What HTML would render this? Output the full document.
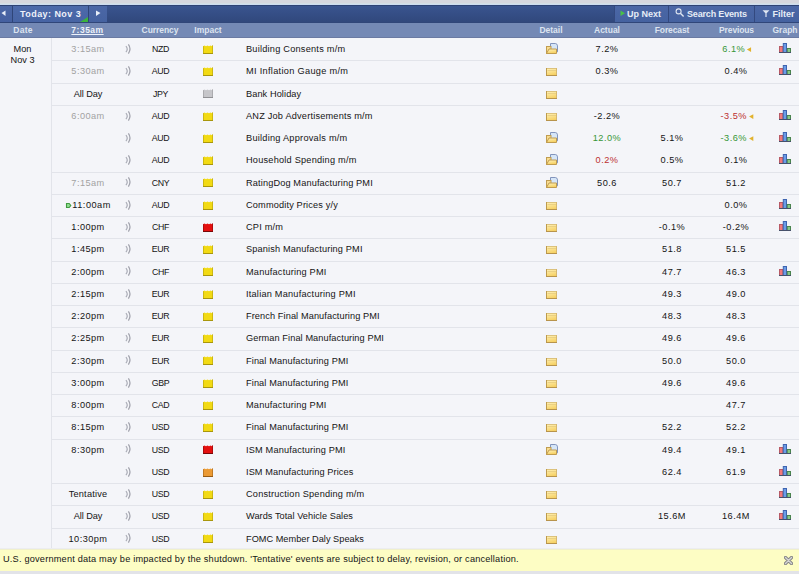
<!DOCTYPE html>
<html><head><meta charset="utf-8"><style>
*{margin:0;padding:0;box-sizing:border-box}
html,body{width:799px;height:574px;overflow:hidden;background:#f4f5f9;font-family:"Liberation Sans",sans-serif;}
.a{position:absolute}
.t{position:absolute;white-space:nowrap;font-size:9.2px;letter-spacing:0px;line-height:12px;color:#333}
.c{transform:translateX(-50%)}
svg{display:block}
.nb{color:#e6ecf6;font-weight:bold;font-size:9px}
.hb{color:#dde4f0;font-weight:bold;font-size:8.5px}
</style></head><body>
<svg width='0' height='0' style='position:absolute'><defs><linearGradient id='fg' x1='0' y1='0' x2='0.3' y2='1'><stop offset='0' stop-color='#fff3bc'/><stop offset='1' stop-color='#f6d062'/></linearGradient></defs></svg>

<div class="a" style="left:0px;top:0px;width:799px;height:5px;background:#d6d7de;"></div>
<div class="a" style="left:0px;top:3px;width:799px;height:1px;background:#d4dee4;"></div>
<div class="a" style="left:0px;top:4px;width:799px;height:1px;background:#cddcf0;"></div>
<div class="a" style="left:0px;top:5px;width:799px;height:18px;background:linear-gradient(#3a5590,#30477b);"></div>
<div class="a" style="left:0px;top:5px;width:799px;height:1px;background:#2e4374;"></div>
<div class="a" style="left:0px;top:22px;width:799px;height:1px;background:#304679;"></div>
<div class="a" style="left:0px;top:6px;width:12px;height:16px;background:linear-gradient(#4a66a6,#4560a0);"></div>
<div class="a" style="left:12px;top:6px;width:1px;height:16px;background:#2f4578;"></div>
<div class="a" style="left:13px;top:6px;width:75px;height:16px;background:linear-gradient(#4d6aaa,#4764a4);"></div>
<div class="a" style="left:88px;top:6px;width:1px;height:16px;background:#2f4578;"></div>
<div class="a" style="left:89px;top:6px;width:18px;height:16px;background:linear-gradient(#4b67a6,#4562a0);"></div>
<svg class="a" style="left:1px;top:10px" width="6" height="7"><path d="M0.5 3 L4.5 0.5 L4.5 6 Z" fill="#e8eef8"/></svg>
<svg class="a" style="left:95px;top:10px" width="6" height="7"><path d="M5.5 3 L1 0.5 L1 6 Z" fill="#e8eef8"/></svg>
<svg class="a" style="left:80px;top:17px" width="8" height="5"><path d="M8 0 L8 5 L0 5 Z" fill="#3cb43c"/></svg>
<div class="t" style="left:20px;top:8.00px;color:#eef2fa;font-weight:bold;font-size:9px;letter-spacing:0.44px">Today: Nov 3</div>
<div class="a" style="left:615px;top:6px;width:184px;height:16px;background:linear-gradient(#4b67a6,#4562a0);"></div>
<div class="a" style="left:614px;top:6px;width:1px;height:16px;background:#33497f;"></div>
<div class="a" style="left:668px;top:6px;width:1px;height:16px;background:#33497f;"></div>
<div class="a" style="left:754px;top:6px;width:1px;height:16px;background:#33497f;"></div>
<svg class="a" style="left:620px;top:10px" width="6" height="7"><path d="M0.5 0.5 L5 3.2 L0.5 6 Z" fill="#48c048"/></svg>
<div class="t" style="left:627px;top:8.00px;color:#e6ecf6;font-weight:bold;font-size:9px">Up Next</div>
<svg class="a" style="left:675px;top:8px" width="10" height="10"><circle cx="3.6" cy="3.4" r="2.5" fill="none" stroke="#dfe6f2" stroke-width="1.1"/><path d="M5.4 5.2 L8.6 8.4" stroke="#dfe6f2" stroke-width="1.4"/></svg>
<div class="t" style="left:687px;top:8.00px;color:#e6ecf6;font-weight:bold;font-size:9px;letter-spacing:-0.17px">Search Events</div>
<svg class="a" style="left:762px;top:10px" width="8" height="8"><path d="M0.5 0.3 L7.5 0.3 L4.6 3.3 L4.6 7 L3.4 7 L3.4 3.3 Z" fill="#dfe6f2"/></svg>
<div class="t" style="left:772.5px;top:8.00px;color:#e6ecf6;font-weight:bold;font-size:9px">Filter</div>
<div class="a" style="left:0px;top:23px;width:799px;height:14px;background:#7489b5;"></div>
<div class="a" style="left:0px;top:37px;width:799px;height:1px;background:#6a7aa2;"></div>
<div class="t c" style="left:23px;top:24.00px;color:#dde4f0;font-weight:bold;font-size:8.5px;letter-spacing:0.25px">Date</div>
<div class="t c" style="left:160px;top:24.00px;color:#dde4f0;font-weight:bold;font-size:8.5px;letter-spacing:-0.05px">Currency</div>
<div class="t c" style="left:208px;top:24.00px;color:#dde4f0;font-weight:bold;font-size:8.5px;letter-spacing:0px">Impact</div>
<div class="t c" style="left:551px;top:24.00px;color:#dde4f0;font-weight:bold;font-size:8.5px;letter-spacing:0px">Detail</div>
<div class="t c" style="left:607px;top:24.00px;color:#dde4f0;font-weight:bold;font-size:8.5px;letter-spacing:0px">Actual</div>
<div class="t c" style="left:672px;top:24.00px;color:#dde4f0;font-weight:bold;font-size:8.5px;letter-spacing:-0.12px">Forecast</div>
<div class="t c" style="left:736.5px;top:24.00px;color:#dde4f0;font-weight:bold;font-size:8.5px;letter-spacing:-0.13px">Previous</div>
<div class="t c" style="left:785px;top:24.00px;color:#dde4f0;font-weight:bold;font-size:8.5px;letter-spacing:0px">Graph</div>
<div class="t c" style="left:87.5px;top:24.00px;color:#eef2fa;font-weight:bold;font-size:8.5px;letter-spacing:0.5px;text-decoration:underline">7:35am</div>
<div class="a" style="left:51px;top:38px;width:1px;height:511px;background:#e2e4ea;"></div>
<div class="t c" style="left:22.5px;top:43.30px;color:#141414;letter-spacing:0.1px">Mon</div>
<div class="t c" style="left:22.5px;top:54.30px;color:#141414;letter-spacing:0px">Nov 3</div>
<div class="t c" style="left:88px;top:43.00px;color:#a2a2a2;letter-spacing:0.45px">3:15am</div>
<div class="a" style="left:124.5px;top:44px"><svg width="8" height="11" viewBox="0 0 8 11"><path d="M0.9 2.2 Q3.6 5.2 0.9 8.2" fill="none" stroke="#a8aab4" stroke-width="1.15"/><path d="M3.4 0.4 Q6.6 5 3.4 9.6" fill="none" stroke="#a0a2ac" stroke-width="1.25"/></svg></div>
<div class="t c" style="left:160.5px;top:43.00px;color:#141414;letter-spacing:-0.3px;font-size:8.8px">NZD</div>
<div class="a" style="left:203px;top:45px;height:9px"><svg width="10" height="9" viewBox="0 0 10 9"><path d="M0 1.2 L1.5 0.6 L3 1.2 L4.5 0.6 L6 1.2 L7.5 0.6 L9 1.2 L10 0 L10 9 L0 9 Z" fill="#f2da14"/><rect x="0" y="8" width="10" height="1" fill="#a8960c"/><rect x="0" y="1.2" width="0.9" height="7.8" fill="#a8960c" opacity="0.55"/><rect x="9.1" y="0.3" width="0.9" height="8.7" fill="#a8960c" opacity="0.55"/></svg></div>
<div class="t" style="left:246px;top:43.00px;color:#141414;letter-spacing:0.23px">Building Consents m/m</div>
<div class="a" style="left:546px;top:43px;height:12px"><svg width="13" height="12" viewBox="0 0 13 12"><path d="M4.5 0.5 L9.3 0.5 Q11.5 0.7 11.5 2.9 L11.5 8.8 L4.5 8.8 Z" fill="#d6e6f8" stroke="#8294bc" stroke-width="1"/><rect x="0.5" y="3.5" width="4.5" height="7" fill="#f8dc90" stroke="#c09c50" stroke-width="1"/><path d="M3 6 L10.5 6 L10.5 10.5 L0.5 10.5 Z" fill="url(#fg)" stroke="#c09c50" stroke-width="1"/></svg></div>
<div class="t c" style="left:607px;top:43.00px;color:#141414;letter-spacing:0.5px">7.2%</div>
<div class="t c" style="left:737px;top:43.00px;color:#379637;letter-spacing:0.5px">6.1%<span style="display:inline-block;width:6.5px"></span></div>
<div class="t c" style="left:737px;top:47px;height:6px;color:transparent;letter-spacing:0.5px">6.1%<span style="display:inline-block;width:6.5px;vertical-align:top;position:relative"><svg style="position:absolute;left:1.5px;top:0" width="6" height="6" viewBox="0 0 6 6"><path d="M0.6 2.6 L4.8 0.3 L4.8 4.9 Z" fill="#e2b22c"/></svg></span></div>
<div class="a" style="left:779px;top:43px;height:10px"><svg width="12" height="10" viewBox="0 0 12 10"><rect x="0.5" y="3.5" width="3.2" height="6" fill="#f27a7a" stroke="#b85a66" stroke-width="1"/><rect x="4.3" y="0.5" width="3.2" height="9" fill="#6c9ce6" stroke="#3e64b0" stroke-width="1"/><rect x="8.3" y="5.5" width="3.2" height="4" fill="#86c886" stroke="#4a844e" stroke-width="1"/><rect x="0" y="9" width="12" height="1" fill="#46506a"/></svg></div>
<div class="a" style="left:52px;top:60px;width:747px;height:1px;background:#e2e4ea"></div>
<div class="t c" style="left:88px;top:65.00px;color:#a2a2a2;letter-spacing:0.45px">5:30am</div>
<div class="a" style="left:124.5px;top:66px"><svg width="8" height="11" viewBox="0 0 8 11"><path d="M0.9 2.2 Q3.6 5.2 0.9 8.2" fill="none" stroke="#a8aab4" stroke-width="1.15"/><path d="M3.4 0.4 Q6.6 5 3.4 9.6" fill="none" stroke="#a0a2ac" stroke-width="1.25"/></svg></div>
<div class="t c" style="left:160.5px;top:65.00px;color:#141414;letter-spacing:-0.3px;font-size:8.8px">AUD</div>
<div class="a" style="left:203px;top:67px;height:9px"><svg width="10" height="9" viewBox="0 0 10 9"><path d="M0 1.2 L1.5 0.6 L3 1.2 L4.5 0.6 L6 1.2 L7.5 0.6 L9 1.2 L10 0 L10 9 L0 9 Z" fill="#f2da14"/><rect x="0" y="8" width="10" height="1" fill="#a8960c"/><rect x="0" y="1.2" width="0.9" height="7.8" fill="#a8960c" opacity="0.55"/><rect x="9.1" y="0.3" width="0.9" height="8.7" fill="#a8960c" opacity="0.55"/></svg></div>
<div class="t" style="left:246px;top:65.00px;color:#141414;letter-spacing:0.31px">MI Inflation Gauge m/m</div>
<div class="a" style="left:546px;top:68px;height:12px"><svg width="11" height="9" viewBox="0 0 11 9"><rect x="0" y="0" width="11" height="8" fill="url(#fg)"/><rect x="0" y="0" width="11" height="1" fill="#dcc27c"/><rect x="10" y="0" width="1" height="8" fill="#d6b870"/><rect x="0" y="0" width="1" height="8" fill="#bd9a4c"/><rect x="0" y="7" width="11" height="1" fill="#b8944c"/><rect x="1.5" y="2" width="8.5" height="1" fill="#e6cc80" opacity="0.8"/></svg></div>
<div class="t c" style="left:607px;top:65.00px;color:#141414;letter-spacing:0.5px">0.3%</div>
<div class="t c" style="left:736px;top:65.00px;color:#141414;letter-spacing:0.5px">0.4%</div>
<div class="a" style="left:779px;top:65px;height:10px"><svg width="12" height="10" viewBox="0 0 12 10"><rect x="0.5" y="3.5" width="3.2" height="6" fill="#f27a7a" stroke="#b85a66" stroke-width="1"/><rect x="4.3" y="0.5" width="3.2" height="9" fill="#6c9ce6" stroke="#3e64b0" stroke-width="1"/><rect x="8.3" y="5.5" width="3.2" height="4" fill="#86c886" stroke="#4a844e" stroke-width="1"/><rect x="0" y="9" width="12" height="1" fill="#46506a"/></svg></div>
<div class="a" style="left:52px;top:83px;width:747px;height:1px;background:#e2e4ea"></div>
<div class="t c" style="left:88px;top:88.00px;color:#141414;letter-spacing:-0.1px">All Day</div>
<div class="t c" style="left:160.5px;top:88.00px;color:#141414;letter-spacing:-0.3px;font-size:8.8px">JPY</div>
<div class="a" style="left:203px;top:89px;height:9px"><svg width="10" height="9" viewBox="0 0 10 9"><path d="M0 1.2 L1.5 0.6 L3 1.2 L4.5 0.6 L6 1.2 L7.5 0.6 L9 1.2 L10 0 L10 9 L0 9 Z" fill="#c6c6ca"/><rect x="0" y="8" width="10" height="1" fill="#909094"/><rect x="0" y="1.2" width="0.9" height="7.8" fill="#909094" opacity="0.55"/><rect x="9.1" y="0.3" width="0.9" height="8.7" fill="#909094" opacity="0.55"/></svg></div>
<div class="t" style="left:246px;top:88.00px;color:#141414;letter-spacing:0.09px">Bank Holiday</div>
<div class="a" style="left:546px;top:91px;height:12px"><svg width="11" height="9" viewBox="0 0 11 9"><rect x="0" y="0" width="11" height="8" fill="url(#fg)"/><rect x="0" y="0" width="11" height="1" fill="#dcc27c"/><rect x="10" y="0" width="1" height="8" fill="#d6b870"/><rect x="0" y="0" width="1" height="8" fill="#bd9a4c"/><rect x="0" y="7" width="11" height="1" fill="#b8944c"/><rect x="1.5" y="2" width="8.5" height="1" fill="#e6cc80" opacity="0.8"/></svg></div>
<div class="a" style="left:52px;top:105px;width:747px;height:1px;background:#e2e4ea"></div>
<div class="t c" style="left:88px;top:110.00px;color:#a2a2a2;letter-spacing:0.45px">6:00am</div>
<div class="a" style="left:124.5px;top:111px"><svg width="8" height="11" viewBox="0 0 8 11"><path d="M0.9 2.2 Q3.6 5.2 0.9 8.2" fill="none" stroke="#a8aab4" stroke-width="1.15"/><path d="M3.4 0.4 Q6.6 5 3.4 9.6" fill="none" stroke="#a0a2ac" stroke-width="1.25"/></svg></div>
<div class="t c" style="left:160.5px;top:110.00px;color:#141414;letter-spacing:-0.3px;font-size:8.8px">AUD</div>
<div class="a" style="left:203px;top:112px;height:9px"><svg width="10" height="9" viewBox="0 0 10 9"><path d="M0 1.2 L1.5 0.6 L3 1.2 L4.5 0.6 L6 1.2 L7.5 0.6 L9 1.2 L10 0 L10 9 L0 9 Z" fill="#f2da14"/><rect x="0" y="8" width="10" height="1" fill="#a8960c"/><rect x="0" y="1.2" width="0.9" height="7.8" fill="#a8960c" opacity="0.55"/><rect x="9.1" y="0.3" width="0.9" height="8.7" fill="#a8960c" opacity="0.55"/></svg></div>
<div class="t" style="left:246px;top:110.00px;color:#141414;letter-spacing:0.2px">ANZ Job Advertisements m/m</div>
<div class="a" style="left:546px;top:113px;height:12px"><svg width="11" height="9" viewBox="0 0 11 9"><rect x="0" y="0" width="11" height="8" fill="url(#fg)"/><rect x="0" y="0" width="11" height="1" fill="#dcc27c"/><rect x="10" y="0" width="1" height="8" fill="#d6b870"/><rect x="0" y="0" width="1" height="8" fill="#bd9a4c"/><rect x="0" y="7" width="11" height="1" fill="#b8944c"/><rect x="1.5" y="2" width="8.5" height="1" fill="#e6cc80" opacity="0.8"/></svg></div>
<div class="t c" style="left:607px;top:110.00px;color:#141414;letter-spacing:0.5px">-2.2%</div>
<div class="t c" style="left:737px;top:110.00px;color:#bc3030;letter-spacing:0.5px">-3.5%<span style="display:inline-block;width:6.5px"></span></div>
<div class="t c" style="left:737px;top:114px;height:6px;color:transparent;letter-spacing:0.5px">-3.5%<span style="display:inline-block;width:6.5px;vertical-align:top;position:relative"><svg style="position:absolute;left:1.5px;top:0" width="6" height="6" viewBox="0 0 6 6"><path d="M0.6 2.6 L4.8 0.3 L4.8 4.9 Z" fill="#e2b22c"/></svg></span></div>
<div class="a" style="left:779px;top:110px;height:10px"><svg width="12" height="10" viewBox="0 0 12 10"><rect x="0.5" y="3.5" width="3.2" height="6" fill="#f27a7a" stroke="#b85a66" stroke-width="1"/><rect x="4.3" y="0.5" width="3.2" height="9" fill="#6c9ce6" stroke="#3e64b0" stroke-width="1"/><rect x="8.3" y="5.5" width="3.2" height="4" fill="#86c886" stroke="#4a844e" stroke-width="1"/><rect x="0" y="9" width="12" height="1" fill="#46506a"/></svg></div>
<div class="a" style="left:124.5px;top:133px"><svg width="8" height="11" viewBox="0 0 8 11"><path d="M0.9 2.2 Q3.6 5.2 0.9 8.2" fill="none" stroke="#a8aab4" stroke-width="1.15"/><path d="M3.4 0.4 Q6.6 5 3.4 9.6" fill="none" stroke="#a0a2ac" stroke-width="1.25"/></svg></div>
<div class="t c" style="left:160.5px;top:132.00px;color:#141414;letter-spacing:-0.3px;font-size:8.8px">AUD</div>
<div class="a" style="left:203px;top:134px;height:9px"><svg width="10" height="9" viewBox="0 0 10 9"><path d="M0 1.2 L1.5 0.6 L3 1.2 L4.5 0.6 L6 1.2 L7.5 0.6 L9 1.2 L10 0 L10 9 L0 9 Z" fill="#f2da14"/><rect x="0" y="8" width="10" height="1" fill="#a8960c"/><rect x="0" y="1.2" width="0.9" height="7.8" fill="#a8960c" opacity="0.55"/><rect x="9.1" y="0.3" width="0.9" height="8.7" fill="#a8960c" opacity="0.55"/></svg></div>
<div class="t" style="left:246px;top:132.00px;color:#141414;letter-spacing:0.25px">Building Approvals m/m</div>
<div class="a" style="left:546px;top:132px;height:12px"><svg width="13" height="12" viewBox="0 0 13 12"><path d="M4.5 0.5 L9.3 0.5 Q11.5 0.7 11.5 2.9 L11.5 8.8 L4.5 8.8 Z" fill="#d6e6f8" stroke="#8294bc" stroke-width="1"/><rect x="0.5" y="3.5" width="4.5" height="7" fill="#f8dc90" stroke="#c09c50" stroke-width="1"/><path d="M3 6 L10.5 6 L10.5 10.5 L0.5 10.5 Z" fill="url(#fg)" stroke="#c09c50" stroke-width="1"/></svg></div>
<div class="t c" style="left:607px;top:132.00px;color:#379637;letter-spacing:0.5px">12.0%</div>
<div class="t c" style="left:672px;top:132.00px;color:#141414;letter-spacing:0.5px">5.1%</div>
<div class="t c" style="left:737px;top:132.00px;color:#379637;letter-spacing:0.5px">-3.6%<span style="display:inline-block;width:6.5px"></span></div>
<div class="t c" style="left:737px;top:136px;height:6px;color:transparent;letter-spacing:0.5px">-3.6%<span style="display:inline-block;width:6.5px;vertical-align:top;position:relative"><svg style="position:absolute;left:1.5px;top:0" width="6" height="6" viewBox="0 0 6 6"><path d="M0.6 2.6 L4.8 0.3 L4.8 4.9 Z" fill="#e2b22c"/></svg></span></div>
<div class="a" style="left:779px;top:132px;height:10px"><svg width="12" height="10" viewBox="0 0 12 10"><rect x="0.5" y="3.5" width="3.2" height="6" fill="#f27a7a" stroke="#b85a66" stroke-width="1"/><rect x="4.3" y="0.5" width="3.2" height="9" fill="#6c9ce6" stroke="#3e64b0" stroke-width="1"/><rect x="8.3" y="5.5" width="3.2" height="4" fill="#86c886" stroke="#4a844e" stroke-width="1"/><rect x="0" y="9" width="12" height="1" fill="#46506a"/></svg></div>
<div class="a" style="left:124.5px;top:155px"><svg width="8" height="11" viewBox="0 0 8 11"><path d="M0.9 2.2 Q3.6 5.2 0.9 8.2" fill="none" stroke="#a8aab4" stroke-width="1.15"/><path d="M3.4 0.4 Q6.6 5 3.4 9.6" fill="none" stroke="#a0a2ac" stroke-width="1.25"/></svg></div>
<div class="t c" style="left:160.5px;top:154.00px;color:#141414;letter-spacing:-0.3px;font-size:8.8px">AUD</div>
<div class="a" style="left:203px;top:156px;height:9px"><svg width="10" height="9" viewBox="0 0 10 9"><path d="M0 1.2 L1.5 0.6 L3 1.2 L4.5 0.6 L6 1.2 L7.5 0.6 L9 1.2 L10 0 L10 9 L0 9 Z" fill="#f2da14"/><rect x="0" y="8" width="10" height="1" fill="#a8960c"/><rect x="0" y="1.2" width="0.9" height="7.8" fill="#a8960c" opacity="0.55"/><rect x="9.1" y="0.3" width="0.9" height="8.7" fill="#a8960c" opacity="0.55"/></svg></div>
<div class="t" style="left:246px;top:154.00px;color:#141414;letter-spacing:0.22px">Household Spending m/m</div>
<div class="a" style="left:546px;top:154px;height:12px"><svg width="13" height="12" viewBox="0 0 13 12"><path d="M4.5 0.5 L9.3 0.5 Q11.5 0.7 11.5 2.9 L11.5 8.8 L4.5 8.8 Z" fill="#d6e6f8" stroke="#8294bc" stroke-width="1"/><rect x="0.5" y="3.5" width="4.5" height="7" fill="#f8dc90" stroke="#c09c50" stroke-width="1"/><path d="M3 6 L10.5 6 L10.5 10.5 L0.5 10.5 Z" fill="url(#fg)" stroke="#c09c50" stroke-width="1"/></svg></div>
<div class="t c" style="left:607px;top:154.00px;color:#bc3030;letter-spacing:0.5px">0.2%</div>
<div class="t c" style="left:672px;top:154.00px;color:#141414;letter-spacing:0.5px">0.5%</div>
<div class="t c" style="left:736px;top:154.00px;color:#141414;letter-spacing:0.5px">0.1%</div>
<div class="a" style="left:779px;top:154px;height:10px"><svg width="12" height="10" viewBox="0 0 12 10"><rect x="0.5" y="3.5" width="3.2" height="6" fill="#f27a7a" stroke="#b85a66" stroke-width="1"/><rect x="4.3" y="0.5" width="3.2" height="9" fill="#6c9ce6" stroke="#3e64b0" stroke-width="1"/><rect x="8.3" y="5.5" width="3.2" height="4" fill="#86c886" stroke="#4a844e" stroke-width="1"/><rect x="0" y="9" width="12" height="1" fill="#46506a"/></svg></div>
<div class="a" style="left:52px;top:172px;width:747px;height:1px;background:#e2e4ea"></div>
<div class="t c" style="left:88px;top:177.00px;color:#a2a2a2;letter-spacing:0.45px">7:15am</div>
<div class="a" style="left:124.5px;top:177px"><svg width="8" height="11" viewBox="0 0 8 11"><path d="M0.9 2.2 Q3.6 5.2 0.9 8.2" fill="none" stroke="#a8aab4" stroke-width="1.15"/><path d="M3.4 0.4 Q6.6 5 3.4 9.6" fill="none" stroke="#a0a2ac" stroke-width="1.25"/></svg></div>
<div class="t c" style="left:160.5px;top:177.00px;color:#141414;letter-spacing:-0.3px;font-size:8.8px">CNY</div>
<div class="a" style="left:203px;top:178px;height:9px"><svg width="10" height="9" viewBox="0 0 10 9"><path d="M0 1.2 L1.5 0.6 L3 1.2 L4.5 0.6 L6 1.2 L7.5 0.6 L9 1.2 L10 0 L10 9 L0 9 Z" fill="#f2da14"/><rect x="0" y="8" width="10" height="1" fill="#a8960c"/><rect x="0" y="1.2" width="0.9" height="7.8" fill="#a8960c" opacity="0.55"/><rect x="9.1" y="0.3" width="0.9" height="8.7" fill="#a8960c" opacity="0.55"/></svg></div>
<div class="t" style="left:246px;top:177.00px;color:#141414;letter-spacing:0.14px">RatingDog Manufacturing PMI</div>
<div class="a" style="left:546px;top:177px;height:12px"><svg width="13" height="12" viewBox="0 0 13 12"><path d="M4.5 0.5 L9.3 0.5 Q11.5 0.7 11.5 2.9 L11.5 8.8 L4.5 8.8 Z" fill="#d6e6f8" stroke="#8294bc" stroke-width="1"/><rect x="0.5" y="3.5" width="4.5" height="7" fill="#f8dc90" stroke="#c09c50" stroke-width="1"/><path d="M3 6 L10.5 6 L10.5 10.5 L0.5 10.5 Z" fill="url(#fg)" stroke="#c09c50" stroke-width="1"/></svg></div>
<div class="t c" style="left:607px;top:177.00px;color:#141414;letter-spacing:0.5px">50.6</div>
<div class="t c" style="left:672px;top:177.00px;color:#141414;letter-spacing:0.5px">50.7</div>
<div class="t c" style="left:736px;top:177.00px;color:#141414;letter-spacing:0.5px">51.2</div>
<div class="a" style="left:52px;top:194px;width:747px;height:1px;background:#e2e4ea"></div>
<div class="t" style="left:72.3px;top:199.00px;color:#141414;letter-spacing:0.5px">11:00am</div>
<svg class="a" style="left:65px;top:202px" width="7" height="7"><path d="M1.5 1.5 L4.2 1.5 L5.8 3.5 L4.2 5.5 L1.5 5.5 Z" fill="#8edc8e" stroke="#3f9a3f" stroke-width="1.1"/></svg>
<div class="a" style="left:124.5px;top:200px"><svg width="8" height="11" viewBox="0 0 8 11"><path d="M0.9 2.2 Q3.6 5.2 0.9 8.2" fill="none" stroke="#a8aab4" stroke-width="1.15"/><path d="M3.4 0.4 Q6.6 5 3.4 9.6" fill="none" stroke="#a0a2ac" stroke-width="1.25"/></svg></div>
<div class="t c" style="left:160.5px;top:199.00px;color:#141414;letter-spacing:-0.3px;font-size:8.8px">AUD</div>
<div class="a" style="left:203px;top:201px;height:9px"><svg width="10" height="9" viewBox="0 0 10 9"><path d="M0 1.2 L1.5 0.6 L3 1.2 L4.5 0.6 L6 1.2 L7.5 0.6 L9 1.2 L10 0 L10 9 L0 9 Z" fill="#f2da14"/><rect x="0" y="8" width="10" height="1" fill="#a8960c"/><rect x="0" y="1.2" width="0.9" height="7.8" fill="#a8960c" opacity="0.55"/><rect x="9.1" y="0.3" width="0.9" height="8.7" fill="#a8960c" opacity="0.55"/></svg></div>
<div class="t" style="left:246px;top:199.00px;color:#141414;letter-spacing:0.16px">Commodity Prices y/y</div>
<div class="a" style="left:546px;top:202px;height:12px"><svg width="11" height="9" viewBox="0 0 11 9"><rect x="0" y="0" width="11" height="8" fill="url(#fg)"/><rect x="0" y="0" width="11" height="1" fill="#dcc27c"/><rect x="10" y="0" width="1" height="8" fill="#d6b870"/><rect x="0" y="0" width="1" height="8" fill="#bd9a4c"/><rect x="0" y="7" width="11" height="1" fill="#b8944c"/><rect x="1.5" y="2" width="8.5" height="1" fill="#e6cc80" opacity="0.8"/></svg></div>
<div class="t c" style="left:736px;top:199.00px;color:#141414;letter-spacing:0.5px">0.0%</div>
<div class="a" style="left:779px;top:199px;height:10px"><svg width="12" height="10" viewBox="0 0 12 10"><rect x="0.5" y="3.5" width="3.2" height="6" fill="#f27a7a" stroke="#b85a66" stroke-width="1"/><rect x="4.3" y="0.5" width="3.2" height="9" fill="#6c9ce6" stroke="#3e64b0" stroke-width="1"/><rect x="8.3" y="5.5" width="3.2" height="4" fill="#86c886" stroke="#4a844e" stroke-width="1"/><rect x="0" y="9" width="12" height="1" fill="#46506a"/></svg></div>
<div class="a" style="left:52px;top:216px;width:747px;height:1px;background:#e2e4ea"></div>
<div class="t c" style="left:88px;top:221.00px;color:#141414;letter-spacing:0.45px">1:00pm</div>
<div class="a" style="left:124.5px;top:222px"><svg width="8" height="11" viewBox="0 0 8 11"><path d="M0.9 2.2 Q3.6 5.2 0.9 8.2" fill="none" stroke="#a8aab4" stroke-width="1.15"/><path d="M3.4 0.4 Q6.6 5 3.4 9.6" fill="none" stroke="#a0a2ac" stroke-width="1.25"/></svg></div>
<div class="t c" style="left:160.5px;top:221.00px;color:#141414;letter-spacing:-0.3px;font-size:8.8px">CHF</div>
<div class="a" style="left:203px;top:223px;height:9px"><svg width="10" height="9" viewBox="0 0 10 9"><path d="M0 1.2 L1.5 0.6 L3 1.2 L4.5 0.6 L6 1.2 L7.5 0.6 L9 1.2 L10 0 L10 9 L0 9 Z" fill="#e41010"/><rect x="0" y="8" width="10" height="1" fill="#780808"/><rect x="0" y="1.2" width="0.9" height="7.8" fill="#780808" opacity="0.55"/><rect x="9.1" y="0.3" width="0.9" height="8.7" fill="#780808" opacity="0.55"/></svg></div>
<div class="t" style="left:246px;top:221.00px;color:#141414;letter-spacing:0.2px">CPI m/m</div>
<div class="a" style="left:546px;top:224px;height:12px"><svg width="11" height="9" viewBox="0 0 11 9"><rect x="0" y="0" width="11" height="8" fill="url(#fg)"/><rect x="0" y="0" width="11" height="1" fill="#dcc27c"/><rect x="10" y="0" width="1" height="8" fill="#d6b870"/><rect x="0" y="0" width="1" height="8" fill="#bd9a4c"/><rect x="0" y="7" width="11" height="1" fill="#b8944c"/><rect x="1.5" y="2" width="8.5" height="1" fill="#e6cc80" opacity="0.8"/></svg></div>
<div class="t c" style="left:672px;top:221.00px;color:#141414;letter-spacing:0.5px">-0.1%</div>
<div class="t c" style="left:736px;top:221.00px;color:#141414;letter-spacing:0.5px">-0.2%</div>
<div class="a" style="left:779px;top:221px;height:10px"><svg width="12" height="10" viewBox="0 0 12 10"><rect x="0.5" y="3.5" width="3.2" height="6" fill="#f27a7a" stroke="#b85a66" stroke-width="1"/><rect x="4.3" y="0.5" width="3.2" height="9" fill="#6c9ce6" stroke="#3e64b0" stroke-width="1"/><rect x="8.3" y="5.5" width="3.2" height="4" fill="#86c886" stroke="#4a844e" stroke-width="1"/><rect x="0" y="9" width="12" height="1" fill="#46506a"/></svg></div>
<div class="a" style="left:52px;top:238px;width:747px;height:1px;background:#e2e4ea"></div>
<div class="t c" style="left:88px;top:243.00px;color:#141414;letter-spacing:0.45px">1:45pm</div>
<div class="a" style="left:124.5px;top:244px"><svg width="8" height="11" viewBox="0 0 8 11"><path d="M0.9 2.2 Q3.6 5.2 0.9 8.2" fill="none" stroke="#a8aab4" stroke-width="1.15"/><path d="M3.4 0.4 Q6.6 5 3.4 9.6" fill="none" stroke="#a0a2ac" stroke-width="1.25"/></svg></div>
<div class="t c" style="left:160.5px;top:243.00px;color:#141414;letter-spacing:-0.3px;font-size:8.8px">EUR</div>
<div class="a" style="left:203px;top:245px;height:9px"><svg width="10" height="9" viewBox="0 0 10 9"><path d="M0 1.2 L1.5 0.6 L3 1.2 L4.5 0.6 L6 1.2 L7.5 0.6 L9 1.2 L10 0 L10 9 L0 9 Z" fill="#f2da14"/><rect x="0" y="8" width="10" height="1" fill="#a8960c"/><rect x="0" y="1.2" width="0.9" height="7.8" fill="#a8960c" opacity="0.55"/><rect x="9.1" y="0.3" width="0.9" height="8.7" fill="#a8960c" opacity="0.55"/></svg></div>
<div class="t" style="left:246px;top:243.00px;color:#141414;letter-spacing:0.15px">Spanish Manufacturing PMI</div>
<div class="a" style="left:546px;top:246px;height:12px"><svg width="11" height="9" viewBox="0 0 11 9"><rect x="0" y="0" width="11" height="8" fill="url(#fg)"/><rect x="0" y="0" width="11" height="1" fill="#dcc27c"/><rect x="10" y="0" width="1" height="8" fill="#d6b870"/><rect x="0" y="0" width="1" height="8" fill="#bd9a4c"/><rect x="0" y="7" width="11" height="1" fill="#b8944c"/><rect x="1.5" y="2" width="8.5" height="1" fill="#e6cc80" opacity="0.8"/></svg></div>
<div class="t c" style="left:672px;top:243.00px;color:#141414;letter-spacing:0.5px">51.8</div>
<div class="t c" style="left:736px;top:243.00px;color:#141414;letter-spacing:0.5px">51.5</div>
<div class="a" style="left:52px;top:261px;width:747px;height:1px;background:#e2e4ea"></div>
<div class="t c" style="left:88px;top:266.00px;color:#141414;letter-spacing:0.45px">2:00pm</div>
<div class="a" style="left:124.5px;top:266px"><svg width="8" height="11" viewBox="0 0 8 11"><path d="M0.9 2.2 Q3.6 5.2 0.9 8.2" fill="none" stroke="#a8aab4" stroke-width="1.15"/><path d="M3.4 0.4 Q6.6 5 3.4 9.6" fill="none" stroke="#a0a2ac" stroke-width="1.25"/></svg></div>
<div class="t c" style="left:160.5px;top:266.00px;color:#141414;letter-spacing:-0.3px;font-size:8.8px">CHF</div>
<div class="a" style="left:203px;top:267px;height:9px"><svg width="10" height="9" viewBox="0 0 10 9"><path d="M0 1.2 L1.5 0.6 L3 1.2 L4.5 0.6 L6 1.2 L7.5 0.6 L9 1.2 L10 0 L10 9 L0 9 Z" fill="#f2da14"/><rect x="0" y="8" width="10" height="1" fill="#a8960c"/><rect x="0" y="1.2" width="0.9" height="7.8" fill="#a8960c" opacity="0.55"/><rect x="9.1" y="0.3" width="0.9" height="8.7" fill="#a8960c" opacity="0.55"/></svg></div>
<div class="t" style="left:246px;top:266.00px;color:#141414;letter-spacing:0.2px">Manufacturing PMI</div>
<div class="a" style="left:546px;top:269px;height:12px"><svg width="11" height="9" viewBox="0 0 11 9"><rect x="0" y="0" width="11" height="8" fill="url(#fg)"/><rect x="0" y="0" width="11" height="1" fill="#dcc27c"/><rect x="10" y="0" width="1" height="8" fill="#d6b870"/><rect x="0" y="0" width="1" height="8" fill="#bd9a4c"/><rect x="0" y="7" width="11" height="1" fill="#b8944c"/><rect x="1.5" y="2" width="8.5" height="1" fill="#e6cc80" opacity="0.8"/></svg></div>
<div class="t c" style="left:672px;top:266.00px;color:#141414;letter-spacing:0.5px">47.7</div>
<div class="t c" style="left:736px;top:266.00px;color:#141414;letter-spacing:0.5px">46.3</div>
<div class="a" style="left:779px;top:266px;height:10px"><svg width="12" height="10" viewBox="0 0 12 10"><rect x="0.5" y="3.5" width="3.2" height="6" fill="#f27a7a" stroke="#b85a66" stroke-width="1"/><rect x="4.3" y="0.5" width="3.2" height="9" fill="#6c9ce6" stroke="#3e64b0" stroke-width="1"/><rect x="8.3" y="5.5" width="3.2" height="4" fill="#86c886" stroke="#4a844e" stroke-width="1"/><rect x="0" y="9" width="12" height="1" fill="#46506a"/></svg></div>
<div class="a" style="left:52px;top:283px;width:747px;height:1px;background:#e2e4ea"></div>
<div class="t c" style="left:88px;top:288.00px;color:#141414;letter-spacing:0.45px">2:15pm</div>
<div class="a" style="left:124.5px;top:289px"><svg width="8" height="11" viewBox="0 0 8 11"><path d="M0.9 2.2 Q3.6 5.2 0.9 8.2" fill="none" stroke="#a8aab4" stroke-width="1.15"/><path d="M3.4 0.4 Q6.6 5 3.4 9.6" fill="none" stroke="#a0a2ac" stroke-width="1.25"/></svg></div>
<div class="t c" style="left:160.5px;top:288.00px;color:#141414;letter-spacing:-0.3px;font-size:8.8px">EUR</div>
<div class="a" style="left:203px;top:290px;height:9px"><svg width="10" height="9" viewBox="0 0 10 9"><path d="M0 1.2 L1.5 0.6 L3 1.2 L4.5 0.6 L6 1.2 L7.5 0.6 L9 1.2 L10 0 L10 9 L0 9 Z" fill="#f2da14"/><rect x="0" y="8" width="10" height="1" fill="#a8960c"/><rect x="0" y="1.2" width="0.9" height="7.8" fill="#a8960c" opacity="0.55"/><rect x="9.1" y="0.3" width="0.9" height="8.7" fill="#a8960c" opacity="0.55"/></svg></div>
<div class="t" style="left:246px;top:288.00px;color:#141414;letter-spacing:0.22px">Italian Manufacturing PMI</div>
<div class="a" style="left:546px;top:291px;height:12px"><svg width="11" height="9" viewBox="0 0 11 9"><rect x="0" y="0" width="11" height="8" fill="url(#fg)"/><rect x="0" y="0" width="11" height="1" fill="#dcc27c"/><rect x="10" y="0" width="1" height="8" fill="#d6b870"/><rect x="0" y="0" width="1" height="8" fill="#bd9a4c"/><rect x="0" y="7" width="11" height="1" fill="#b8944c"/><rect x="1.5" y="2" width="8.5" height="1" fill="#e6cc80" opacity="0.8"/></svg></div>
<div class="t c" style="left:672px;top:288.00px;color:#141414;letter-spacing:0.5px">49.3</div>
<div class="t c" style="left:736px;top:288.00px;color:#141414;letter-spacing:0.5px">49.0</div>
<div class="a" style="left:52px;top:305px;width:747px;height:1px;background:#e2e4ea"></div>
<div class="t c" style="left:88px;top:310.00px;color:#141414;letter-spacing:0.45px">2:20pm</div>
<div class="a" style="left:124.5px;top:311px"><svg width="8" height="11" viewBox="0 0 8 11"><path d="M0.9 2.2 Q3.6 5.2 0.9 8.2" fill="none" stroke="#a8aab4" stroke-width="1.15"/><path d="M3.4 0.4 Q6.6 5 3.4 9.6" fill="none" stroke="#a0a2ac" stroke-width="1.25"/></svg></div>
<div class="t c" style="left:160.5px;top:310.00px;color:#141414;letter-spacing:-0.3px;font-size:8.8px">EUR</div>
<div class="a" style="left:203px;top:312px;height:9px"><svg width="10" height="9" viewBox="0 0 10 9"><path d="M0 1.2 L1.5 0.6 L3 1.2 L4.5 0.6 L6 1.2 L7.5 0.6 L9 1.2 L10 0 L10 9 L0 9 Z" fill="#f2da14"/><rect x="0" y="8" width="10" height="1" fill="#a8960c"/><rect x="0" y="1.2" width="0.9" height="7.8" fill="#a8960c" opacity="0.55"/><rect x="9.1" y="0.3" width="0.9" height="8.7" fill="#a8960c" opacity="0.55"/></svg></div>
<div class="t" style="left:246px;top:310.00px;color:#141414;letter-spacing:0.1px">French Final Manufacturing PMI</div>
<div class="a" style="left:546px;top:313px;height:12px"><svg width="11" height="9" viewBox="0 0 11 9"><rect x="0" y="0" width="11" height="8" fill="url(#fg)"/><rect x="0" y="0" width="11" height="1" fill="#dcc27c"/><rect x="10" y="0" width="1" height="8" fill="#d6b870"/><rect x="0" y="0" width="1" height="8" fill="#bd9a4c"/><rect x="0" y="7" width="11" height="1" fill="#b8944c"/><rect x="1.5" y="2" width="8.5" height="1" fill="#e6cc80" opacity="0.8"/></svg></div>
<div class="t c" style="left:672px;top:310.00px;color:#141414;letter-spacing:0.5px">48.3</div>
<div class="t c" style="left:736px;top:310.00px;color:#141414;letter-spacing:0.5px">48.3</div>
<div class="a" style="left:52px;top:327px;width:747px;height:1px;background:#e2e4ea"></div>
<div class="t c" style="left:88px;top:332.00px;color:#141414;letter-spacing:0.45px">2:25pm</div>
<div class="a" style="left:124.5px;top:333px"><svg width="8" height="11" viewBox="0 0 8 11"><path d="M0.9 2.2 Q3.6 5.2 0.9 8.2" fill="none" stroke="#a8aab4" stroke-width="1.15"/><path d="M3.4 0.4 Q6.6 5 3.4 9.6" fill="none" stroke="#a0a2ac" stroke-width="1.25"/></svg></div>
<div class="t c" style="left:160.5px;top:332.00px;color:#141414;letter-spacing:-0.3px;font-size:8.8px">EUR</div>
<div class="a" style="left:203px;top:334px;height:9px"><svg width="10" height="9" viewBox="0 0 10 9"><path d="M0 1.2 L1.5 0.6 L3 1.2 L4.5 0.6 L6 1.2 L7.5 0.6 L9 1.2 L10 0 L10 9 L0 9 Z" fill="#f2da14"/><rect x="0" y="8" width="10" height="1" fill="#a8960c"/><rect x="0" y="1.2" width="0.9" height="7.8" fill="#a8960c" opacity="0.55"/><rect x="9.1" y="0.3" width="0.9" height="8.7" fill="#a8960c" opacity="0.55"/></svg></div>
<div class="t" style="left:246px;top:332.00px;color:#141414;letter-spacing:0.09px">German Final Manufacturing PMI</div>
<div class="a" style="left:546px;top:335px;height:12px"><svg width="11" height="9" viewBox="0 0 11 9"><rect x="0" y="0" width="11" height="8" fill="url(#fg)"/><rect x="0" y="0" width="11" height="1" fill="#dcc27c"/><rect x="10" y="0" width="1" height="8" fill="#d6b870"/><rect x="0" y="0" width="1" height="8" fill="#bd9a4c"/><rect x="0" y="7" width="11" height="1" fill="#b8944c"/><rect x="1.5" y="2" width="8.5" height="1" fill="#e6cc80" opacity="0.8"/></svg></div>
<div class="t c" style="left:672px;top:332.00px;color:#141414;letter-spacing:0.5px">49.6</div>
<div class="t c" style="left:736px;top:332.00px;color:#141414;letter-spacing:0.5px">49.6</div>
<div class="a" style="left:52px;top:350px;width:747px;height:1px;background:#e2e4ea"></div>
<div class="t c" style="left:88px;top:355.00px;color:#141414;letter-spacing:0.45px">2:30pm</div>
<div class="a" style="left:124.5px;top:355px"><svg width="8" height="11" viewBox="0 0 8 11"><path d="M0.9 2.2 Q3.6 5.2 0.9 8.2" fill="none" stroke="#a8aab4" stroke-width="1.15"/><path d="M3.4 0.4 Q6.6 5 3.4 9.6" fill="none" stroke="#a0a2ac" stroke-width="1.25"/></svg></div>
<div class="t c" style="left:160.5px;top:355.00px;color:#141414;letter-spacing:-0.3px;font-size:8.8px">EUR</div>
<div class="a" style="left:203px;top:356px;height:9px"><svg width="10" height="9" viewBox="0 0 10 9"><path d="M0 1.2 L1.5 0.6 L3 1.2 L4.5 0.6 L6 1.2 L7.5 0.6 L9 1.2 L10 0 L10 9 L0 9 Z" fill="#f2da14"/><rect x="0" y="8" width="10" height="1" fill="#a8960c"/><rect x="0" y="1.2" width="0.9" height="7.8" fill="#a8960c" opacity="0.55"/><rect x="9.1" y="0.3" width="0.9" height="8.7" fill="#a8960c" opacity="0.55"/></svg></div>
<div class="t" style="left:246px;top:355.00px;color:#141414;letter-spacing:0.12px">Final Manufacturing PMI</div>
<div class="a" style="left:546px;top:358px;height:12px"><svg width="11" height="9" viewBox="0 0 11 9"><rect x="0" y="0" width="11" height="8" fill="url(#fg)"/><rect x="0" y="0" width="11" height="1" fill="#dcc27c"/><rect x="10" y="0" width="1" height="8" fill="#d6b870"/><rect x="0" y="0" width="1" height="8" fill="#bd9a4c"/><rect x="0" y="7" width="11" height="1" fill="#b8944c"/><rect x="1.5" y="2" width="8.5" height="1" fill="#e6cc80" opacity="0.8"/></svg></div>
<div class="t c" style="left:672px;top:355.00px;color:#141414;letter-spacing:0.5px">50.0</div>
<div class="t c" style="left:736px;top:355.00px;color:#141414;letter-spacing:0.5px">50.0</div>
<div class="a" style="left:52px;top:372px;width:747px;height:1px;background:#e2e4ea"></div>
<div class="t c" style="left:88px;top:377.00px;color:#141414;letter-spacing:0.45px">3:00pm</div>
<div class="a" style="left:124.5px;top:378px"><svg width="8" height="11" viewBox="0 0 8 11"><path d="M0.9 2.2 Q3.6 5.2 0.9 8.2" fill="none" stroke="#a8aab4" stroke-width="1.15"/><path d="M3.4 0.4 Q6.6 5 3.4 9.6" fill="none" stroke="#a0a2ac" stroke-width="1.25"/></svg></div>
<div class="t c" style="left:160.5px;top:377.00px;color:#141414;letter-spacing:-0.3px;font-size:8.8px">GBP</div>
<div class="a" style="left:203px;top:379px;height:9px"><svg width="10" height="9" viewBox="0 0 10 9"><path d="M0 1.2 L1.5 0.6 L3 1.2 L4.5 0.6 L6 1.2 L7.5 0.6 L9 1.2 L10 0 L10 9 L0 9 Z" fill="#f2da14"/><rect x="0" y="8" width="10" height="1" fill="#a8960c"/><rect x="0" y="1.2" width="0.9" height="7.8" fill="#a8960c" opacity="0.55"/><rect x="9.1" y="0.3" width="0.9" height="8.7" fill="#a8960c" opacity="0.55"/></svg></div>
<div class="t" style="left:246px;top:377.00px;color:#141414;letter-spacing:0.12px">Final Manufacturing PMI</div>
<div class="a" style="left:546px;top:380px;height:12px"><svg width="11" height="9" viewBox="0 0 11 9"><rect x="0" y="0" width="11" height="8" fill="url(#fg)"/><rect x="0" y="0" width="11" height="1" fill="#dcc27c"/><rect x="10" y="0" width="1" height="8" fill="#d6b870"/><rect x="0" y="0" width="1" height="8" fill="#bd9a4c"/><rect x="0" y="7" width="11" height="1" fill="#b8944c"/><rect x="1.5" y="2" width="8.5" height="1" fill="#e6cc80" opacity="0.8"/></svg></div>
<div class="t c" style="left:672px;top:377.00px;color:#141414;letter-spacing:0.5px">49.6</div>
<div class="t c" style="left:736px;top:377.00px;color:#141414;letter-spacing:0.5px">49.6</div>
<div class="a" style="left:52px;top:394px;width:747px;height:1px;background:#e2e4ea"></div>
<div class="t c" style="left:88px;top:399.00px;color:#141414;letter-spacing:0.45px">8:00pm</div>
<div class="a" style="left:124.5px;top:400px"><svg width="8" height="11" viewBox="0 0 8 11"><path d="M0.9 2.2 Q3.6 5.2 0.9 8.2" fill="none" stroke="#a8aab4" stroke-width="1.15"/><path d="M3.4 0.4 Q6.6 5 3.4 9.6" fill="none" stroke="#a0a2ac" stroke-width="1.25"/></svg></div>
<div class="t c" style="left:160.5px;top:399.00px;color:#141414;letter-spacing:-0.3px;font-size:8.8px">CAD</div>
<div class="a" style="left:203px;top:401px;height:9px"><svg width="10" height="9" viewBox="0 0 10 9"><path d="M0 1.2 L1.5 0.6 L3 1.2 L4.5 0.6 L6 1.2 L7.5 0.6 L9 1.2 L10 0 L10 9 L0 9 Z" fill="#f2da14"/><rect x="0" y="8" width="10" height="1" fill="#a8960c"/><rect x="0" y="1.2" width="0.9" height="7.8" fill="#a8960c" opacity="0.55"/><rect x="9.1" y="0.3" width="0.9" height="8.7" fill="#a8960c" opacity="0.55"/></svg></div>
<div class="t" style="left:246px;top:399.00px;color:#141414;letter-spacing:0.2px">Manufacturing PMI</div>
<div class="a" style="left:546px;top:402px;height:12px"><svg width="11" height="9" viewBox="0 0 11 9"><rect x="0" y="0" width="11" height="8" fill="url(#fg)"/><rect x="0" y="0" width="11" height="1" fill="#dcc27c"/><rect x="10" y="0" width="1" height="8" fill="#d6b870"/><rect x="0" y="0" width="1" height="8" fill="#bd9a4c"/><rect x="0" y="7" width="11" height="1" fill="#b8944c"/><rect x="1.5" y="2" width="8.5" height="1" fill="#e6cc80" opacity="0.8"/></svg></div>
<div class="t c" style="left:736px;top:399.00px;color:#141414;letter-spacing:0.5px">47.7</div>
<div class="a" style="left:52px;top:416px;width:747px;height:1px;background:#e2e4ea"></div>
<div class="t c" style="left:88px;top:421.00px;color:#141414;letter-spacing:0.45px">8:15pm</div>
<div class="a" style="left:124.5px;top:422px"><svg width="8" height="11" viewBox="0 0 8 11"><path d="M0.9 2.2 Q3.6 5.2 0.9 8.2" fill="none" stroke="#a8aab4" stroke-width="1.15"/><path d="M3.4 0.4 Q6.6 5 3.4 9.6" fill="none" stroke="#a0a2ac" stroke-width="1.25"/></svg></div>
<div class="t c" style="left:160.5px;top:421.00px;color:#141414;letter-spacing:-0.3px;font-size:8.8px">USD</div>
<div class="a" style="left:203px;top:423px;height:9px"><svg width="10" height="9" viewBox="0 0 10 9"><path d="M0 1.2 L1.5 0.6 L3 1.2 L4.5 0.6 L6 1.2 L7.5 0.6 L9 1.2 L10 0 L10 9 L0 9 Z" fill="#f2da14"/><rect x="0" y="8" width="10" height="1" fill="#a8960c"/><rect x="0" y="1.2" width="0.9" height="7.8" fill="#a8960c" opacity="0.55"/><rect x="9.1" y="0.3" width="0.9" height="8.7" fill="#a8960c" opacity="0.55"/></svg></div>
<div class="t" style="left:246px;top:421.00px;color:#141414;letter-spacing:0.12px">Final Manufacturing PMI</div>
<div class="a" style="left:546px;top:424px;height:12px"><svg width="11" height="9" viewBox="0 0 11 9"><rect x="0" y="0" width="11" height="8" fill="url(#fg)"/><rect x="0" y="0" width="11" height="1" fill="#dcc27c"/><rect x="10" y="0" width="1" height="8" fill="#d6b870"/><rect x="0" y="0" width="1" height="8" fill="#bd9a4c"/><rect x="0" y="7" width="11" height="1" fill="#b8944c"/><rect x="1.5" y="2" width="8.5" height="1" fill="#e6cc80" opacity="0.8"/></svg></div>
<div class="t c" style="left:672px;top:421.00px;color:#141414;letter-spacing:0.5px">52.2</div>
<div class="t c" style="left:736px;top:421.00px;color:#141414;letter-spacing:0.5px">52.2</div>
<div class="a" style="left:52px;top:439px;width:747px;height:1px;background:#e2e4ea"></div>
<div class="t c" style="left:88px;top:444.00px;color:#141414;letter-spacing:0.45px">8:30pm</div>
<div class="a" style="left:124.5px;top:444px"><svg width="8" height="11" viewBox="0 0 8 11"><path d="M0.9 2.2 Q3.6 5.2 0.9 8.2" fill="none" stroke="#a8aab4" stroke-width="1.15"/><path d="M3.4 0.4 Q6.6 5 3.4 9.6" fill="none" stroke="#a0a2ac" stroke-width="1.25"/></svg></div>
<div class="t c" style="left:160.5px;top:444.00px;color:#141414;letter-spacing:-0.3px;font-size:8.8px">USD</div>
<div class="a" style="left:203px;top:445px;height:9px"><svg width="10" height="9" viewBox="0 0 10 9"><path d="M0 1.2 L1.5 0.6 L3 1.2 L4.5 0.6 L6 1.2 L7.5 0.6 L9 1.2 L10 0 L10 9 L0 9 Z" fill="#e41010"/><rect x="0" y="8" width="10" height="1" fill="#780808"/><rect x="0" y="1.2" width="0.9" height="7.8" fill="#780808" opacity="0.55"/><rect x="9.1" y="0.3" width="0.9" height="8.7" fill="#780808" opacity="0.55"/></svg></div>
<div class="t" style="left:246px;top:444.00px;color:#141414;letter-spacing:0.17px">ISM Manufacturing PMI</div>
<div class="a" style="left:546px;top:444px;height:12px"><svg width="13" height="12" viewBox="0 0 13 12"><path d="M4.5 0.5 L9.3 0.5 Q11.5 0.7 11.5 2.9 L11.5 8.8 L4.5 8.8 Z" fill="#d6e6f8" stroke="#8294bc" stroke-width="1"/><rect x="0.5" y="3.5" width="4.5" height="7" fill="#f8dc90" stroke="#c09c50" stroke-width="1"/><path d="M3 6 L10.5 6 L10.5 10.5 L0.5 10.5 Z" fill="url(#fg)" stroke="#c09c50" stroke-width="1"/></svg></div>
<div class="t c" style="left:672px;top:444.00px;color:#141414;letter-spacing:0.5px">49.4</div>
<div class="t c" style="left:736px;top:444.00px;color:#141414;letter-spacing:0.5px">49.1</div>
<div class="a" style="left:779px;top:444px;height:10px"><svg width="12" height="10" viewBox="0 0 12 10"><rect x="0.5" y="3.5" width="3.2" height="6" fill="#f27a7a" stroke="#b85a66" stroke-width="1"/><rect x="4.3" y="0.5" width="3.2" height="9" fill="#6c9ce6" stroke="#3e64b0" stroke-width="1"/><rect x="8.3" y="5.5" width="3.2" height="4" fill="#86c886" stroke="#4a844e" stroke-width="1"/><rect x="0" y="9" width="12" height="1" fill="#46506a"/></svg></div>
<div class="a" style="left:124.5px;top:467px"><svg width="8" height="11" viewBox="0 0 8 11"><path d="M0.9 2.2 Q3.6 5.2 0.9 8.2" fill="none" stroke="#a8aab4" stroke-width="1.15"/><path d="M3.4 0.4 Q6.6 5 3.4 9.6" fill="none" stroke="#a0a2ac" stroke-width="1.25"/></svg></div>
<div class="t c" style="left:160.5px;top:466.00px;color:#141414;letter-spacing:-0.3px;font-size:8.8px">USD</div>
<div class="a" style="left:203px;top:468px;height:9px"><svg width="10" height="9" viewBox="0 0 10 9"><path d="M0 1.2 L1.5 0.6 L3 1.2 L4.5 0.6 L6 1.2 L7.5 0.6 L9 1.2 L10 0 L10 9 L0 9 Z" fill="#eb9a34"/><rect x="0" y="8" width="10" height="1" fill="#955a14"/><rect x="0" y="1.2" width="0.9" height="7.8" fill="#955a14" opacity="0.55"/><rect x="9.1" y="0.3" width="0.9" height="8.7" fill="#955a14" opacity="0.55"/></svg></div>
<div class="t" style="left:246px;top:466.00px;color:#141414;letter-spacing:0.09px">ISM Manufacturing Prices</div>
<div class="a" style="left:546px;top:469px;height:12px"><svg width="11" height="9" viewBox="0 0 11 9"><rect x="0" y="0" width="11" height="8" fill="url(#fg)"/><rect x="0" y="0" width="11" height="1" fill="#dcc27c"/><rect x="10" y="0" width="1" height="8" fill="#d6b870"/><rect x="0" y="0" width="1" height="8" fill="#bd9a4c"/><rect x="0" y="7" width="11" height="1" fill="#b8944c"/><rect x="1.5" y="2" width="8.5" height="1" fill="#e6cc80" opacity="0.8"/></svg></div>
<div class="t c" style="left:672px;top:466.00px;color:#141414;letter-spacing:0.5px">62.4</div>
<div class="t c" style="left:736px;top:466.00px;color:#141414;letter-spacing:0.5px">61.9</div>
<div class="a" style="left:779px;top:466px;height:10px"><svg width="12" height="10" viewBox="0 0 12 10"><rect x="0.5" y="3.5" width="3.2" height="6" fill="#f27a7a" stroke="#b85a66" stroke-width="1"/><rect x="4.3" y="0.5" width="3.2" height="9" fill="#6c9ce6" stroke="#3e64b0" stroke-width="1"/><rect x="8.3" y="5.5" width="3.2" height="4" fill="#86c886" stroke="#4a844e" stroke-width="1"/><rect x="0" y="9" width="12" height="1" fill="#46506a"/></svg></div>
<div class="a" style="left:52px;top:483px;width:747px;height:1px;background:#e2e4ea"></div>
<div class="t c" style="left:88px;top:488.00px;color:#141414;letter-spacing:0.2px">Tentative</div>
<div class="a" style="left:124.5px;top:489px"><svg width="8" height="11" viewBox="0 0 8 11"><path d="M0.9 2.2 Q3.6 5.2 0.9 8.2" fill="none" stroke="#a8aab4" stroke-width="1.15"/><path d="M3.4 0.4 Q6.6 5 3.4 9.6" fill="none" stroke="#a0a2ac" stroke-width="1.25"/></svg></div>
<div class="t c" style="left:160.5px;top:488.00px;color:#141414;letter-spacing:-0.3px;font-size:8.8px">USD</div>
<div class="a" style="left:203px;top:490px;height:9px"><svg width="10" height="9" viewBox="0 0 10 9"><path d="M0 1.2 L1.5 0.6 L3 1.2 L4.5 0.6 L6 1.2 L7.5 0.6 L9 1.2 L10 0 L10 9 L0 9 Z" fill="#f2da14"/><rect x="0" y="8" width="10" height="1" fill="#a8960c"/><rect x="0" y="1.2" width="0.9" height="7.8" fill="#a8960c" opacity="0.55"/><rect x="9.1" y="0.3" width="0.9" height="8.7" fill="#a8960c" opacity="0.55"/></svg></div>
<div class="t" style="left:246px;top:488.00px;color:#141414;letter-spacing:0.2px">Construction Spending m/m</div>
<div class="a" style="left:546px;top:491px;height:12px"><svg width="11" height="9" viewBox="0 0 11 9"><rect x="0" y="0" width="11" height="8" fill="url(#fg)"/><rect x="0" y="0" width="11" height="1" fill="#dcc27c"/><rect x="10" y="0" width="1" height="8" fill="#d6b870"/><rect x="0" y="0" width="1" height="8" fill="#bd9a4c"/><rect x="0" y="7" width="11" height="1" fill="#b8944c"/><rect x="1.5" y="2" width="8.5" height="1" fill="#e6cc80" opacity="0.8"/></svg></div>
<div class="a" style="left:779px;top:488px;height:10px"><svg width="12" height="10" viewBox="0 0 12 10"><rect x="0.5" y="3.5" width="3.2" height="6" fill="#f27a7a" stroke="#b85a66" stroke-width="1"/><rect x="4.3" y="0.5" width="3.2" height="9" fill="#6c9ce6" stroke="#3e64b0" stroke-width="1"/><rect x="8.3" y="5.5" width="3.2" height="4" fill="#86c886" stroke="#4a844e" stroke-width="1"/><rect x="0" y="9" width="12" height="1" fill="#46506a"/></svg></div>
<div class="a" style="left:52px;top:505px;width:747px;height:1px;background:#e2e4ea"></div>
<div class="t c" style="left:88px;top:510.00px;color:#141414;letter-spacing:-0.1px">All Day</div>
<div class="a" style="left:124.5px;top:511px"><svg width="8" height="11" viewBox="0 0 8 11"><path d="M0.9 2.2 Q3.6 5.2 0.9 8.2" fill="none" stroke="#a8aab4" stroke-width="1.15"/><path d="M3.4 0.4 Q6.6 5 3.4 9.6" fill="none" stroke="#a0a2ac" stroke-width="1.25"/></svg></div>
<div class="t c" style="left:160.5px;top:510.00px;color:#141414;letter-spacing:-0.3px;font-size:8.8px">USD</div>
<div class="a" style="left:203px;top:512px;height:9px"><svg width="10" height="9" viewBox="0 0 10 9"><path d="M0 1.2 L1.5 0.6 L3 1.2 L4.5 0.6 L6 1.2 L7.5 0.6 L9 1.2 L10 0 L10 9 L0 9 Z" fill="#f2da14"/><rect x="0" y="8" width="10" height="1" fill="#a8960c"/><rect x="0" y="1.2" width="0.9" height="7.8" fill="#a8960c" opacity="0.55"/><rect x="9.1" y="0.3" width="0.9" height="8.7" fill="#a8960c" opacity="0.55"/></svg></div>
<div class="t" style="left:246px;top:510.00px;color:#141414;letter-spacing:0.05px">Wards Total Vehicle Sales</div>
<div class="a" style="left:546px;top:513px;height:12px"><svg width="11" height="9" viewBox="0 0 11 9"><rect x="0" y="0" width="11" height="8" fill="url(#fg)"/><rect x="0" y="0" width="11" height="1" fill="#dcc27c"/><rect x="10" y="0" width="1" height="8" fill="#d6b870"/><rect x="0" y="0" width="1" height="8" fill="#bd9a4c"/><rect x="0" y="7" width="11" height="1" fill="#b8944c"/><rect x="1.5" y="2" width="8.5" height="1" fill="#e6cc80" opacity="0.8"/></svg></div>
<div class="t c" style="left:672px;top:510.00px;color:#141414;letter-spacing:0.5px">15.6M</div>
<div class="t c" style="left:736px;top:510.00px;color:#141414;letter-spacing:0.5px">16.4M</div>
<div class="a" style="left:779px;top:510px;height:10px"><svg width="12" height="10" viewBox="0 0 12 10"><rect x="0.5" y="3.5" width="3.2" height="6" fill="#f27a7a" stroke="#b85a66" stroke-width="1"/><rect x="4.3" y="0.5" width="3.2" height="9" fill="#6c9ce6" stroke="#3e64b0" stroke-width="1"/><rect x="8.3" y="5.5" width="3.2" height="4" fill="#86c886" stroke="#4a844e" stroke-width="1"/><rect x="0" y="9" width="12" height="1" fill="#46506a"/></svg></div>
<div class="a" style="left:52px;top:528px;width:747px;height:1px;background:#e2e4ea"></div>
<div class="t c" style="left:88px;top:533.00px;color:#141414;letter-spacing:0.45px">10:30pm</div>
<div class="a" style="left:124.5px;top:533px"><svg width="8" height="11" viewBox="0 0 8 11"><path d="M0.9 2.2 Q3.6 5.2 0.9 8.2" fill="none" stroke="#a8aab4" stroke-width="1.15"/><path d="M3.4 0.4 Q6.6 5 3.4 9.6" fill="none" stroke="#a0a2ac" stroke-width="1.25"/></svg></div>
<div class="t c" style="left:160.5px;top:533.00px;color:#141414;letter-spacing:-0.3px;font-size:8.8px">USD</div>
<div class="a" style="left:203px;top:534px;height:9px"><svg width="10" height="9" viewBox="0 0 10 9"><path d="M0 1.2 L1.5 0.6 L3 1.2 L4.5 0.6 L6 1.2 L7.5 0.6 L9 1.2 L10 0 L10 9 L0 9 Z" fill="#f2da14"/><rect x="0" y="8" width="10" height="1" fill="#a8960c"/><rect x="0" y="1.2" width="0.9" height="7.8" fill="#a8960c" opacity="0.55"/><rect x="9.1" y="0.3" width="0.9" height="8.7" fill="#a8960c" opacity="0.55"/></svg></div>
<div class="t" style="left:246px;top:533.00px;color:#141414;letter-spacing:0.02px">FOMC Member Daly Speaks</div>
<div class="a" style="left:546px;top:536px;height:12px"><svg width="11" height="9" viewBox="0 0 11 9"><rect x="0" y="0" width="11" height="8" fill="url(#fg)"/><rect x="0" y="0" width="11" height="1" fill="#dcc27c"/><rect x="10" y="0" width="1" height="8" fill="#d6b870"/><rect x="0" y="0" width="1" height="8" fill="#bd9a4c"/><rect x="0" y="7" width="11" height="1" fill="#b8944c"/><rect x="1.5" y="2" width="8.5" height="1" fill="#e6cc80" opacity="0.8"/></svg></div>
<div class="a" style="left:0px;top:548px;width:799px;height:1px;background:#ecedf0;"></div>
<div class="a" style="left:0px;top:549px;width:799px;height:22px;background:#fdfdc4;"></div>
<div class="a" style="left:0px;top:549px;width:799px;height:1px;background:#f0f0cc;"></div>
<div class="a" style="left:0px;top:571px;width:799px;height:3px;background:#e2e3e8;"></div>
<div class="t" style="left:3px;top:553.00px;color:#141414;letter-spacing:0.2px">U.S. government data may be impacted by the shutdown. 'Tentative' events are subject to delay, revision, or cancellation.</div>
<svg class="a" style="left:784px;top:556px" width="9" height="9"><path d="M1.5 1.5 L7.5 7.5 M7.5 1.5 L1.5 7.5" stroke="#858585" stroke-width="3.2" stroke-linecap="round"/><path d="M1.5 1.5 L7.5 7.5 M7.5 1.5 L1.5 7.5" stroke="#d6d6d6" stroke-width="1.4" stroke-linecap="round"/></svg>
</body></html>
